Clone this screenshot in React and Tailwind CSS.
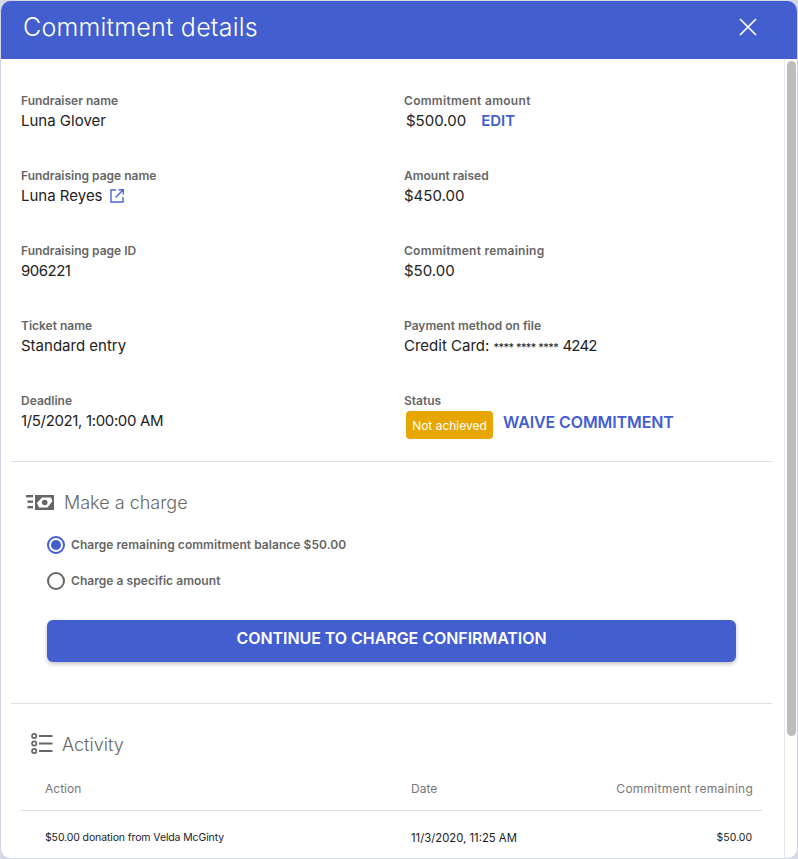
import React from "react";

const F = "font-['Inter','Liberation_Sans',sans-serif]";

function Field({ label, labelClass = "", children }) {
  return (
    <div className="h-[75px]">
      <div className={`text-[12px] leading-[16px] font-semibold text-[#666666] ${labelClass}`}>{label}</div>
      <div className="text-[15px] leading-[22px] pt-px text-[#222222] flex items-center">{children}</div>
    </div>
  );
}

function ExternalIcon() {
  return (
    <svg width="16" height="16" viewBox="0 0 16 16" fill="none" stroke="#4a66d6" strokeWidth="1.4" className="ml-[6px]">
      <path d="M7 2H2v12h12V9" />
      <path d="M6.5 9.5 14 2M9.5 1.7h4.8v4.8" />
    </svg>
  );
}

function MoneyIcon() {
  return (
    <svg width="30" height="16" viewBox="0 0 30 16" className="shrink-0">
      <rect x="1" y="1" width="7" height="2.4" fill="#666666" />
      <rect x="2.5" y="6.5" width="5.5" height="2.4" fill="#666666" />
      <rect x="2.5" y="12" width="5.5" height="2.4" fill="#666666" />
      <rect x="10" y="1" width="19" height="15" fill="#666666" />
      <path d="M12 9 17 3.5H26C26.5 5 27 6 27.5 7L22.5 13.5H14C13.5 12 12.5 10.5 12 9Z" fill="#ffffff" />
      <circle cx="19.7" cy="8.5" r="2.8" fill="#666666" />
    </svg>
  );
}

function ListIcon() {
  return (
    <svg width="22" height="22" viewBox="0 0 22 22" fill="none" stroke="#666666" className="shrink-0">
      <circle cx="3.2" cy="3" r="2.2" strokeWidth="1.7" />
      <circle cx="3.2" cy="10.5" r="2.2" strokeWidth="1.7" />
      <circle cx="3.2" cy="18" r="2.2" strokeWidth="1.7" />
      <path d="M8 3h13.5M8 10.5h13.5M8 18h13.5" strokeWidth="1.8" />
    </svg>
  );
}

export default function App() {
  return (
    <div className={`${F} w-[798px] h-[859px] bg-[#d8d9e6] overflow-hidden pt-px`}>
      <div className="w-full h-[858px] bg-white rounded-t-[10px] rounded-b-[10px] border-x border-b border-[#d3d5e5] flex flex-col overflow-hidden">
        <header className="h-[58px] shrink-0 bg-[#425ecf] flex items-center justify-between pl-[23px] pr-[40px] pb-[6px] -mx-px">
          <h1 className="text-[25px] font-light tracking-[0.22px] text-white leading-none">Commitment details</h1>
          <svg width="20" height="20" viewBox="0 0 20 20" fill="none" stroke="#ffffff" strokeWidth="1.7">
            <path d="M2 2 18 18M18 2 2 18" />
          </svg>
        </header>

        <div className="flex-1 flex min-h-0">
          <main className="flex-1 min-w-0 overflow-hidden pl-[10px] pr-[12px]">
            <div className="grid grid-cols-[383px_1fr] pt-[34px] pl-[10px]">
              <div>
                <Field label="Fundraiser name">Luna Glover</Field>
                <Field label="Fundraising page name">Luna Reyes<ExternalIcon /></Field>
                <Field label="Fundraising page ID"><span className="tracking-[-0.5px]">906221</span></Field>
                <Field label="Ticket name">Standard entry</Field>
                <Field label="Deadline"><span className="tracking-[-0.35px]">1/5/2021, 1:00:00 AM</span></Field>
              </div>
              <div>
                <Field label="Commitment amount" labelClass="tracking-[0.3px]">
                  <span className="ml-[2px]">$500.00</span>
                  <span className="ml-[15px] font-semibold text-[#425ecf]">EDIT</span>
                </Field>
                <Field label="Amount raised">$450.00</Field>
                <Field label="Commitment remaining" labelClass="tracking-[0.25px]">$50.00</Field>
                <Field label="Payment method on file">
                  <span>Credit Card: <span className="text-[11px] tracking-[-0.55px]">**** **** ****</span> <span className="tracking-[-0.8px]">4242</span></span>
                </Field>
                <div className="h-[60px]">
                  <div className="text-[12px] leading-[16px] font-semibold text-[#666666]">Status</div>
                  <div className="flex items-start mt-[2px] ml-[2px]">
                    <span className="h-[28px] w-[87px] pt-[2px] rounded-[4px] bg-[#e8a600] text-white text-[12px] flex items-center justify-center">Not achieved</span>
                    <span className="ml-[10px] text-[16px] leading-[22px] font-semibold text-[#425ecf] tracking-[-0.1px]">WAIVE COMMITMENT</span>
                  </div>
                </div>
              </div>
            </div>

            <div className="border-t border-[#dfdfdf] mt-[-7px] h-[242px] pl-[14px] pt-[29px]">
              <div className="flex items-center h-[22px] gap-[9px]">
                <MoneyIcon />
                <span className="text-[18px] font-light text-[#666666]">Make a charge</span>
              </div>
              <div className="pl-[22px] mt-[22px]">
                <label className="flex items-center h-[20px] gap-[6px]">
                  <span className="w-[18px] h-[18px] rounded-full border-2 border-[#425ecf] flex items-center justify-center">
                    <span className="w-[10px] h-[10px] rounded-full bg-[#425ecf]" />
                  </span>
                  <span className="text-[12px] font-semibold text-[#666666] tracking-[0.05px] -mt-px">Charge remaining commitment balance $50.00</span>
                </label>
                <label className="flex items-center h-[20px] gap-[6px] mt-[16px]">
                  <span className="w-[18px] h-[18px] rounded-full border-2 border-[#666666]" />
                  <span className="text-[12px] font-semibold text-[#666666] tracking-[0.05px] -mt-px">Charge a specific amount</span>
                </label>
                <button className="mt-[29px] w-[689px] h-[42px] pb-[6px] rounded-[6px] bg-[#425ecf] text-white text-[16px] font-semibold tracking-[-0.05px] shadow-[0_2px_4px_rgba(0,0,0,0.25)]">CONTINUE TO CHARGE CONFIRMATION</button>
              </div>
            </div>

            <div className="border-t border-[#dfdfdf]">
              <div className="flex items-center h-[22px] gap-[9px] mt-[29px] pl-[20px]">
                <ListIcon />
                <span className="text-[18px] font-light text-[#666666]">Activity</span>
              </div>
              <div className="mx-[10px] mt-[13px]">
                <div className="grid grid-cols-[366px_1fr_auto] h-[43px] pb-[1px] items-center border-b border-[#dfdfdf] pl-[24px] pr-[9px] text-[12px] text-[#777777]">
                  <span>Action</span><span>Date</span><span className="tracking-[0.25px]">Commitment remaining</span>
                </div>
                <div className="grid grid-cols-[366px_1fr_auto] h-[54px] items-center pl-[24px] pr-[10px] text-[10.5px] text-[#222222]">
                  <span className="tracking-[-0.12px]">$50.00 donation from Velda McGinty</span><span className="text-[11.3px]">11/3/2020, 11:25 AM</span><span>$50.00</span>
                </div>
              </div>
            </div>
          </main>
          <aside className="w-[13px] shrink-0 border-l border-[#e8e8e8] pt-[2px] pl-[2px]">
            <div className="w-[9px] h-[675px] rounded-[5px] bg-[#bdbdbd]" />
          </aside>
        </div>
      </div>
    </div>
  );
}
